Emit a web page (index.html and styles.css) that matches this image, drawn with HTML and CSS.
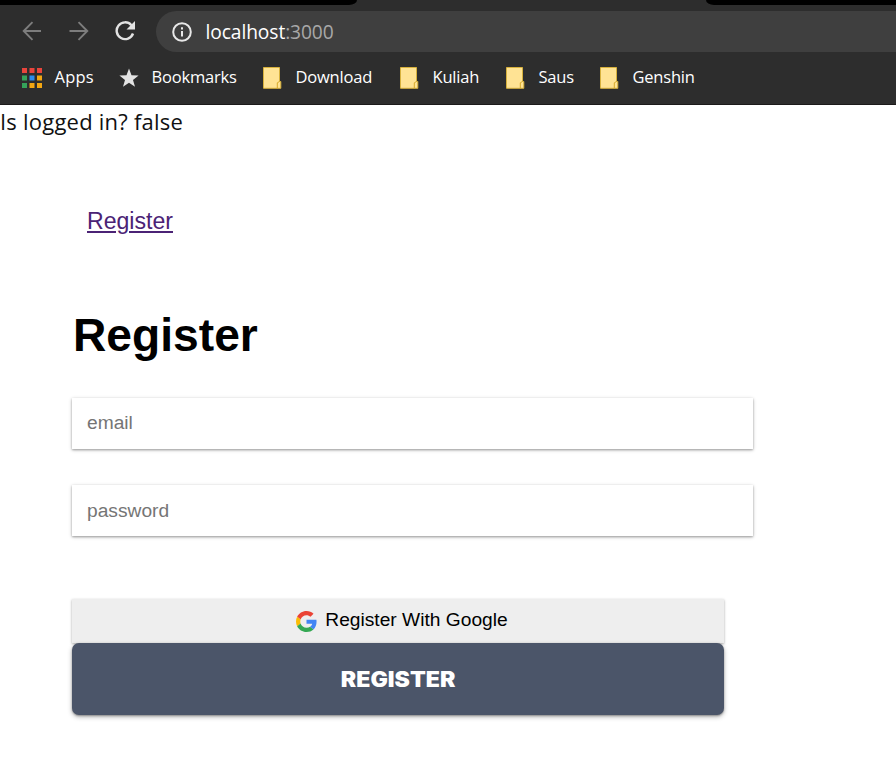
FILE: index.html
```html
<!DOCTYPE html>
<html lang="en">
<head>
<meta charset="utf-8">
<title>Register</title>
<link rel="stylesheet" href="styles.css">
</head>
<body>
<header class="browser">
  <div class="tabs"><span class="tab-left"></span><span class="tab-right"></span></div>
  <div class="toolbar">
    <svg class="nav dim" viewBox="0 0 20 20"><path d="M19 10H2M10.5 1.2 1.7 10l8.8 8.8"/></svg>
    <svg class="nav dim" viewBox="0 0 20 20"><path d="M.5 10H18M9.5 1.2 18.3 10l-8.8 8.8"/></svg>
    <svg class="nav" viewBox="0 0 20 20"><path d="M16.4 4.2A8.4 8.4 0 1 0 18 12.5" stroke-width="2.4"/><path class="solid" d="M20 0v8.5h-8.5z"/></svg>
    <div class="address">
      <svg class="info" viewBox="0 0 20 20"><circle cx="10" cy="10" r="8.8"/><path d="M10 9v5.5M10 5.3v2.2"/></svg>
      <span class="host">localhost</span><span class="port">:3000</span>
    </div>
  </div>
  <nav class="bookmarks">
    <svg class="mark" viewBox="0 0 20 20"><path fill="#e8453c" d="M0 0h5v5H0zM7.5 0h5v5h-5zM15 0h5v5h-5z"/><path fill="#35a35a" d="M0 7.5h5v5H0zM0 15h5v5H0z"/><path fill="#2b8cf0" d="M7.5 7.5h5v5h-5z"/><path fill="#f3a712" d="M15 7.5h5v5h-5zM7.5 15h5v5h-5zM15 15h5v5h-5z"/></svg><span class="name apps">Apps</span>
    <svg class="mark" viewBox="0 0 20 20"><path fill="#e3e3e3" d="m10 .5 2.5 6.7 7.1.3-5.6 4.4 2 6.9-6-4-6 4 2-6.9L.4 7.5l7.1-.3z"/></svg><span class="name marks">Bookmarks</span>
    <svg class="mark" viewBox="0 0 20 22"><path class="folder" d="M.5.5h16v14h1.3v6.8H.5z"/><path class="fold" d="M14.3 21v-5.2l2.2-1.3"/></svg><span class="name download">Download</span>
    <svg class="mark" viewBox="0 0 20 22"><path class="folder" d="M.5.5h16v14h1.3v6.8H.5z"/><path class="fold" d="M14.3 21v-5.2l2.2-1.3"/></svg><span class="name kuliah">Kuliah</span>
    <svg class="mark" viewBox="0 0 20 22"><path class="folder" d="M.5.5h16v14h1.3v6.8H.5z"/><path class="fold" d="M14.3 21v-5.2l2.2-1.3"/></svg><span class="name saus">Saus</span>
    <svg class="mark" viewBox="0 0 20 22"><path class="folder" d="M.5.5h16v14h1.3v6.8H.5z"/><path class="fold" d="M14.3 21v-5.2l2.2-1.3"/></svg><span class="name">Genshin</span>
  </nav>
</header>
<p class="status">Is logged in? false</p>
<main class="page">
  <a class="link" href="#">Register</a>
  <h1>Register</h1>
  <form>
    <input type="email" placeholder="email">
    <input class="secret" type="password" placeholder="password">
    <button class="google" type="button">
      <svg viewBox="0 0 48 48"><path fill="#ea4335" d="M24 9.5c3.54 0 6.71 1.22 9.21 3.6l6.85-6.85C35.9 2.38 30.47 0 24 0 14.62 0 6.51 5.38 2.56 13.22l7.98 6.19C12.43 13.72 17.74 9.5 24 9.5z"/><path fill="#4285f4" d="M46.98 24.55c0-1.57-.15-3.09-.38-4.55H24v9.02h12.94c-.58 2.96-2.26 5.48-4.78 7.18l7.73 6c4.51-4.18 7.09-10.36 7.09-17.65z"/><path fill="#fbbc05" d="M10.53 28.59c-.48-1.45-.76-2.99-.76-4.59s.27-3.14.76-4.59l-7.98-6.19C.92 16.46 0 20.12 0 24c0 3.88.92 7.54 2.56 10.78z"/><path fill="#34a853" d="M24 48c6.48 0 11.93-2.13 15.89-5.81l-7.73-6c-2.15 1.45-4.92 2.3-8.16 2.3-6.26 0-11.57-4.22-13.47-9.91l-7.98 6.19C6.51 42.62 14.62 48 24 48z"/></svg>
      <span>Register With Google</span>
    </button>
    <button class="submit" type="button"><span>REGISTER</span></button>
  </form>
</main>
</body>
</html>
```
FILE: styles.css
```css
* { box-sizing: border-box; }
body { margin: 0; min-height: 762px; background: #fff; overflow: hidden; font-family: "Liberation Sans", Arial, sans-serif; }
.browser { height: 105px; background: #2d2d2d; border-bottom: 1px solid #1c1a1a; font-family: "Open Sans", "Segoe UI", sans-serif; }
.tabs { display: flex; justify-content: space-between; height: 5px; }
.tab-left { width: 357px; background: #000; border-bottom-right-radius: 8px 5px; }
.tab-right { width: 190px; background: #000; border-bottom-left-radius: 8px 5px; }
.toolbar { display: flex; align-items: center; height: 53px; padding: 0 0 0 22px; }
.nav { position: relative; top: -1px; width: 20px; height: 20px; margin-right: 26.5px; fill: none; stroke: #e3e3e3; stroke-width: 2; }
.dim { stroke: #7d7d7d; stroke-width: 1.9; }
.solid { fill: #e3e3e3; stroke: none; }
.address { flex: 1; display: flex; align-items: center; height: 41px; margin-left: -5.5px; padding-left: 16px; border-radius: 21px 0 0 21px; background: #3f3f3f; font-size: 19.2px; }
.info { width: 20px; height: 20px; margin-right: 13.5px; fill: none; stroke: #e8e8e8; stroke-width: 2; }
.host { color: #fff; letter-spacing: -.08px; }
.port { color: #a8a8a8; letter-spacing: -.1px; }
.bookmarks { display: flex; align-items: center; height: 40px; padding-left: 22px; color: #fff; font-size: 16.5px; }
.mark { width: 20px; height: 22px; margin-right: 12.5px; flex: none; }
.folder { fill: #ffe394; stroke: #d7b13c; }
.fold { fill: none; stroke: #d7a928; }
.name { white-space: nowrap; letter-spacing: -.2px; padding-bottom: 3px; }
.apps { width: 64.5px; letter-spacing: .2px; }
.marks { width: 111.5px; }
.download { width: 104.5px; }
.kuliah { width: 73.5px; }
.saus { width: 61.5px; }
.status { margin: 0; height: 34px; line-height: 32px; font-family: "Open Sans", "Segoe UI", sans-serif; font-size: 22px; letter-spacing: .22px; color: #111; white-space: nowrap; }
.page { padding: 67px 0 0 72px; }
.link { display: block; width: max-content; margin-left: 15px; line-height: 30px; font-size: 23.1px; color: #4b2375; text-decoration-thickness: 2px; text-underline-offset: 2px; }
h1 { margin: 71px 0 0 1px; font-size: 46.2px; line-height: 56px; height: 56px; }
form { width: 681px; padding-top: 35px; display: flex; flex-direction: column; }
input { height: 51px; margin: 0 0 36px; padding: 0 15px 1px; border: 0; font: 19.2px "Liberation Sans", Arial, sans-serif; box-shadow: 0 1px 4px rgba(0,0,0,.2), 0 1px 2px rgba(0,0,0,.28); }
.secret { padding-bottom: 0; padding-top: 1px; }
input::placeholder { color: #757575; }
button { width: 652px; border: 0; }
.google { display: flex; align-items: center; justify-content: center; gap: 8px; height: 44px; margin-top: 27px; padding: 0 0 3px 8px; background: #eee; color: #000; font: 19.2px "Liberation Sans", Arial, sans-serif; box-shadow: 0 1px 3px rgba(0,0,0,.2), 0 1px 2px rgba(0,0,0,.16); }
.google svg { width: 21px; height: 21px; margin-top: 3px; }
.submit { position: relative; height: 72px; border-radius: 7px; background: #4b5569; color: #fff; font: 900 21px Inter, sans-serif; box-shadow: 0 2px 5px rgba(0,0,0,.28), 0 1px 2px rgba(0,0,0,.3); }
.submit span { display: inline-block; transform: scaleX(1.1); }
```
